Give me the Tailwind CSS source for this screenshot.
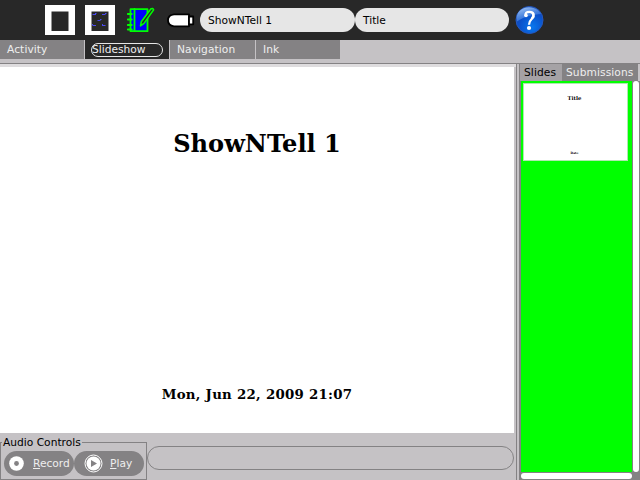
<!DOCTYPE html>
<html lang="en">
<head>
<meta charset="utf-8">
<title>ShowNTell</title>
<script src="https://cdn.jsdelivr.net/npm/@tailwindcss/browser@4"></script>
</head>
<body class="w-[640px] h-[480px] overflow-hidden flex flex-col bg-[#c5c2c5] font-['DejaVu_Sans',sans-serif] text-[10.67px] leading-[14px] text-black">
<header class="h-10 shrink-0 bg-[#282828] flex items-center">
  <svg class="ml-[45px] w-[30px] h-[30px] shrink-0" viewBox="0 0 30 30"><path fill="#fff" fill-rule="evenodd" d="M0 0h30v30H0zM6.500 6.500v19.500h17V6.500z"/></svg>
  <svg class="ml-[10px] w-[30px] h-[30px] shrink-0" viewBox="0 0 30 30"><path fill="#fff" fill-rule="evenodd" d="M0 0h30v30H0zM6.500 6.500v19.500h17V6.500z"/><path d="M7.500 9.500h3.500M17 9.500h3.500M7.500 20.500h3.500M17 20.500h3.500M12.500 15.500h3M10 8.500h1.500M20 8.500h1.500M15 14.500h1.500M7 19.500h1M17 19.500h1" stroke="#4a4af0" stroke-width="1"/></svg>
  <svg class="ml-[11px] w-[30px] h-[30px] shrink-0" viewBox="0 0 30 30" fill="none" stroke="#0f0" stroke-width="1.800" stroke-linecap="round" stroke-linejoin="round"><path fill="#00f" d="M4.500 4.200H21.500V26.200H4.500z"/><path d="M8.500 4v22M1.800 9h4M1.800 14.500h4M1.800 20h4M1.800 24.500h4"/><path fill="#282828" stroke-width="1.600" d="M14.500 20.800l.8-4L24.800 4q1.800-1.300 2.800.9L18 18.400z"/></svg>
  <svg class="ml-[11px] w-[30px] h-[16px] shrink-0" viewBox="0 0 30 16" fill="#fff" stroke="#000" stroke-width="1.800" stroke-linejoin="round"><path d="M7 2.300H22V14.300H7Q1 13.800 1 8.300T7 2.300z"/><path d="M22 4.500h4.200v7.800h-4.200z"/></svg>
  <div class="ml-[3px] w-[155px] h-6 shrink-0 rounded-full bg-[#e6e6e6] px-2 leading-[25px]">ShowNTell 1</div>
  <div class="w-[154px] h-6 shrink-0 rounded-full bg-[#e6e6e6] px-2 leading-[25px]">Title</div>
  <svg class="ml-[6px] w-[29px] h-[29px] shrink-0" viewBox="0 0 29 29"><defs><radialGradient id="g" cx=".6" cy=".75" r=".75"><stop offset="0" stop-color="#0877ee"/><stop offset=".65" stop-color="#0b4fc8"/><stop offset="1" stop-color="#1746aa"/></radialGradient><linearGradient id="h" x2=".6" y2="1"><stop offset="0" stop-color="#b4d5ff"/><stop offset="1" stop-color="#3b83e8" stop-opacity=".35"/></linearGradient></defs><circle cx="14.500" cy="14" r="13.500" fill="url(#g)" stroke="#2459c2" stroke-width="1"/><path d="M2 15.500C0 6.500 7 1 14.500 1.300C20 1.500 24 4.500 26 8C19 8.500 9 10.500 2 15.500z" fill="url(#h)"/><path d="M10.700 10C10 7 11.500 5.800 14.400 5.800C19.300 5.800 19.800 10 17.300 12.500C15.500 14.300 14 15 14 18.800" fill="none" stroke="#fff" stroke-width="2.300"/><path d="M17 6.500Q19.500 9 16.700 12.500" fill="none" stroke="#fff" stroke-width="2"/><circle cx="11" cy="9.500" r="1.800" fill="#fff"/><circle cx="14" cy="22" r="2.100" fill="#fff"/></svg>
</header>
<nav class="h-[23px] shrink-0 flex items-start text-[#eee] tracking-[.08px]">
  <div class="w-[85px] h-[19px] bg-[#848284] border-r border-[#c5c2c5] pl-[7px] leading-[20px]">Activity</div>
  <div class="w-[85px] h-[19px] bg-[#282828] border-r border-[#c5c2c5] flex items-center pl-[6px]"><span class="w-[72px] h-[14px] rounded-full border border-[#e6e6e6] leading-[12px] tracking-normal">Slideshow</span></div>
  <div class="w-[86px] h-[19px] bg-[#848284] border-r border-[#c5c2c5] pl-[7px] leading-[20px]">Navigation</div>
  <div class="w-[84px] h-[19px] bg-[#848284] pl-[7px] leading-[20px]">Ink</div>
</nav>
<main class="h-[417px] shrink-0 flex border-t border-[#848284]">
  <section class="w-[516px] shrink-0 flex flex-col border-t-[3px] border-[#dedcde]">
    <div class="w-[514px] h-[366px] shrink-0 bg-white flex flex-col items-center font-['DejaVu_Serif',serif] font-bold">
      <h1 class="mt-[61px] h-8 text-[24.100px] leading-8 whitespace-nowrap">ShowNTell 1</h1>
      <p class="mt-[224px] h-5 text-[13.330px] tracking-[.27px] leading-5 whitespace-nowrap">Mon, Jun 22, 2009 21:07</p>
    </div>
    <div class="flex h-[47px]">
      <fieldset class="w-[147px] h-[45px] mt-[2px] border border-[#848284]">
        <legend class="ml-[1px] px-px leading-[16px] h-[14px] whitespace-nowrap">Audio Controls</legend>
        <div class="flex ml-[3px] mt-[2px] text-[#eee]">
          <button class="w-[70px] h-[25px] rounded-full bg-[#848284] flex items-center"><svg class="ml-[5px] w-[15px] h-[15px] shrink-0" viewBox="0 0 15 15"><circle cx="7.500" cy="7.500" r="7.300" fill="#fff"/><circle cx="7.500" cy="7.500" r="2.400" fill="#848284"/></svg><span class="ml-[9px]"><u>R</u>ecord</span></button>
          <button class="w-[70px] h-[25px] rounded-full bg-[#848284] flex items-center"><svg class="ml-[10px] w-[19px] h-[19px] shrink-0" viewBox="0 0 19 19"><circle cx="9.500" cy="9.500" r="8.500" fill="none" stroke="#fff"/><circle cx="9.500" cy="9.500" r="7" fill="#fff"/><path fill="#848284" d="M7 6l6 3.500L7 13z"/></svg><span class="ml-[7px]"><u>P</u>lay</span></button>
        </div>
      </fieldset>
      <div class="w-[367px] h-[24px] mt-[13px] rounded-full border border-[#848284]"></div>
    </div>
  </section>
  <div class="w-[4px] shrink-0 border-l border-r border-[#848284]"></div>
  <aside class="w-[120px] shrink-0 flex flex-col bg-[#848284]">
    <div class="h-[17px] shrink-0 flex leading-[17px] whitespace-nowrap">
      <div class="w-[42px] bg-[#a5a2a5] pl-[4px] tracking-[.08px]">Slides</div>
      <div class="w-[76px] pl-[4px] text-[#eee] tracking-[.08px]">Submissions</div>
      <div class="w-[2px] bg-[#c5c2c5]"></div>
    </div>
    <div class="flex h-[391px] shrink-0">
      <div class="w-[113px] h-[391px] bg-[#0f0] border-x border-[#848284] pl-[2px] pt-[2px]">
        <div class="w-[105px] h-[78px] bg-white border border-[#b0e8b0] flex flex-col items-center font-['DejaVu_Serif',serif] font-bold">
          <span class="mt-[10px] h-2 mr-[2px] text-[5.300px] leading-2">Title</span>
          <span class="mt-[48px] h-1.5 mr-[2px] text-[3px] leading-1.5">Date</span>
        </div>
      </div>
      <div class="w-[6px] h-[391px] bg-white rounded-full"></div>
    </div>
    <div class="w-[111px] h-[6px] ml-px mt-px bg-white rounded-full"></div>
  </aside>
</main>
</body>
</html>
